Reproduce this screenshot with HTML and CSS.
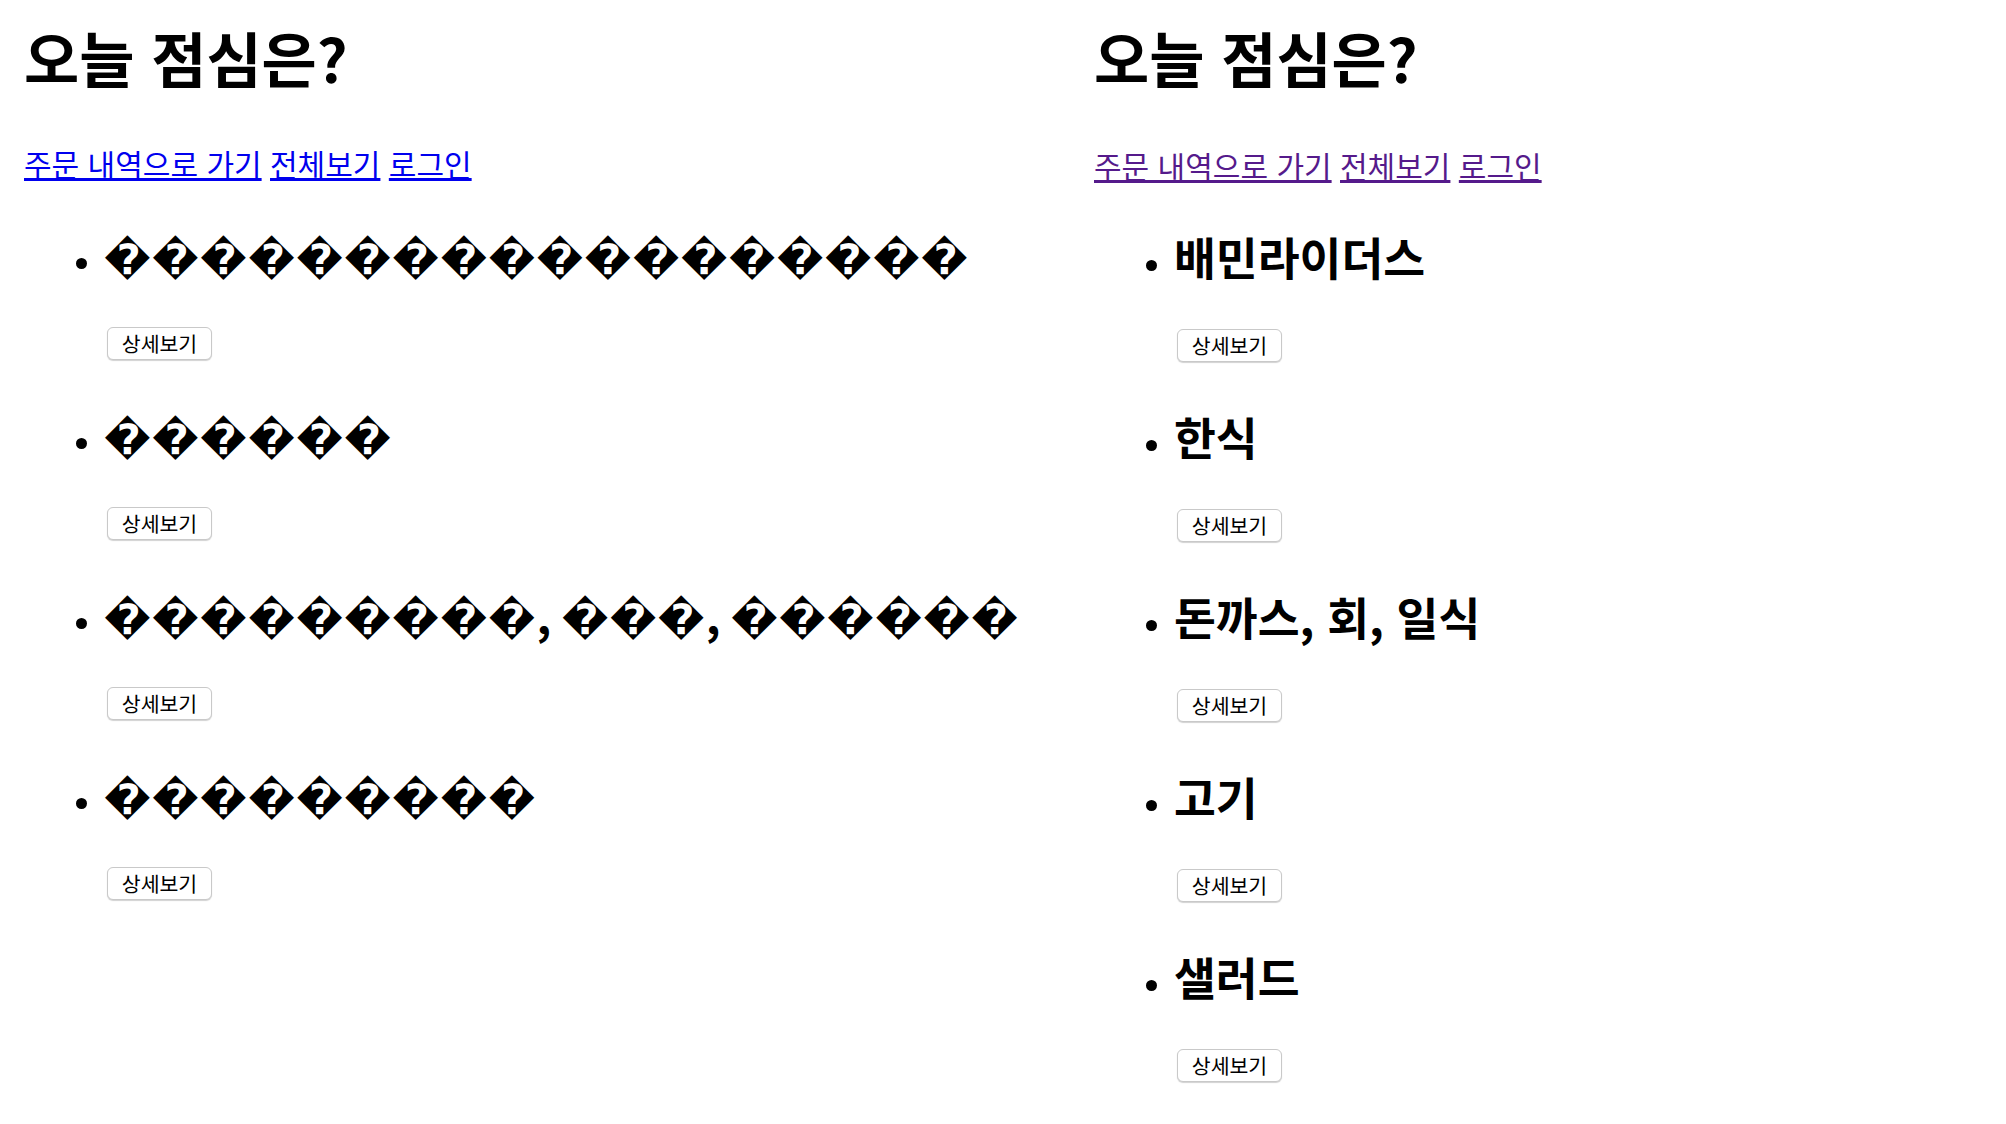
FILE: index.html
```
<!DOCTYPE html>
<html lang="ko">
<head>
<meta charset="utf-8">
<title>오늘 점심은?</title>
<link rel="stylesheet" href="styles.css">
</head>
<body>
<div class="panels">
  <section class="panel panel-left">
    <h1 class="title">오늘 점심은?</h1>
    <p class="nav"><a class="link" href="#orders">주문 내역으로 가기</a> <a class="link" href="#all">전체보기</a> <a class="link" href="#login">로그인</a></p>
    <ul class="list">
      <li class="item"><h2 class="name"><span class="bad">������������������</span></h2><button class="detail">상세보기</button></li>
      <li class="item"><h2 class="name"><span class="bad">������</span></h2><button class="detail">상세보기</button></li>
      <li class="item"><h2 class="name"><span class="bad">���������</span>, <span class="bad">���</span>, <span class="bad">������</span></h2><button class="detail">상세보기</button></li>
      <li class="item"><h2 class="name"><span class="bad">���������</span></h2><button class="detail">상세보기</button></li>
    </ul>
  </section>
  <section class="panel panel-right">
    <h1 class="title">오늘 점심은?</h1>
    <p class="nav"><a class="link visited" href="#orders">주문 내역으로 가기</a> <a class="link visited" href="#all">전체보기</a> <a class="link visited" href="#login">로그인</a></p>
    <ul class="list">
      <li class="item"><h2 class="name">배민라이더스</h2><button class="detail">상세보기</button></li>
      <li class="item"><h2 class="name">한식</h2><button class="detail">상세보기</button></li>
      <li class="item"><h2 class="name">돈까스, 회, 일식</h2><button class="detail">상세보기</button></li>
      <li class="item"><h2 class="name">고기</h2><button class="detail">상세보기</button></li>
      <li class="item"><h2 class="name">샐러드</h2><button class="detail">상세보기</button></li>
    </ul>
  </section>
</div>
</body>
</html>
```

FILE: styles.css
```
html, body {
  margin: 0;
  padding: 0;
  background: #ffffff;
}

body {
  font-family: "Noto Sans CJK KR", "Noto Sans", sans-serif;
  color: #000000;
}

.panels {
  display: flex;
  align-items: flex-start;
}

.panel {
  box-sizing: border-box;
  padding: 23px 0 0 24px;
}

.panel-left {
  width: 1070px;
  flex: none;
}

.panel-right {
  flex: 1;
}

.title {
  margin: 0;
  font-size: 60px;
  line-height: 68px;
  font-weight: 700;
}

.nav {
  margin: 52px 0 0;
  font-size: 30px;
  line-height: 40px;
}

.panel-right .nav {
  margin-top: 53.5px;
}

.link {
  color: #0000ee;
  text-decoration: underline;
}

.link.visited {
  color: #551a8b;
}

.list {
  margin: 43px 0 0;
  padding-left: 80px;
  font-size: 28px;
  list-style: disc;
}

.item {
  margin: 0 0 46px;
}

.name {
  margin: 0 0 45px;
  height: 56px;
  font-size: 45.5px;
  line-height: 56px;
  font-weight: 700;
  white-space: nowrap;
}

.bad {
  font-family: "DejaVu Sans", sans-serif;
  font-size: 42px;
  line-height: 30px;
  letter-spacing: 1.3px;
  font-weight: 700;
}

.detail {
  display: block;
  box-sizing: border-box;
  width: 105px;
  height: 33px;
  margin: 0 0 0 3px;
  padding: 0;
  font-family: "Noto Sans CJK KR", "Noto Sans", sans-serif;
  font-size: 20.5px;
  line-height: 31px;
  color: #000000;
  background: #ffffff;
  border: 1px solid #c9c9c9;
  border-radius: 6px;
  box-shadow: 0 1px 1px rgba(0, 0, 0, 0.18);
}
```
